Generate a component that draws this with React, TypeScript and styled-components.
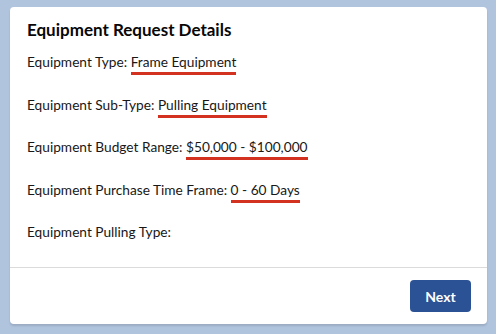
import React from "react";
import styled, { createGlobalStyle } from "styled-components";

const Global = createGlobalStyle`
  html, body { margin: 0; padding: 0; }
  body {
    background: #b0c4de;
    font-family: "Lato", "Open Sans", sans-serif;
    color: #181818;
  }
`;

const Page = styled.div`
  width: 496px;
  height: 334px;
  box-sizing: border-box;
  padding: 7px 9px 10px 10px;
  display: flex;
`;

const Card = styled.div`
  flex: 1;
  background: #fff;
  border-radius: 4px;
  box-shadow: 0 2px 2px rgba(0, 0, 0, 0.12);
  display: flex;
  flex-direction: column;
`;

const Body = styled.div`
  flex: 1;
  padding: 13px 16px 0 17px;
  border-bottom: 1px solid #dddbda;
`;

const Title = styled.h2`
  margin: 0 0 12px;
  font-size: 17px;
  font-weight: 700;
  line-height: 20px;
  color: #080707;
`;

const Fields = styled.div`
  display: flex;
  flex-direction: column;
  gap: 19.5px;
`;

const Row = styled.div`
  font-size: 13.7px;
  line-height: 20px;
  color: #181818;
`;

const Value = styled.span`
  display: inline-block;
  line-height: 16px;
  padding-bottom: 2px;
  border-bottom: 3px solid #d2321f;
`;

const Footer = styled.div`
  display: flex;
  justify-content: flex-end;
  padding: 12px 16px 12px;
`;

const Button = styled.button`
  width: 61px;
  height: 32px;
  border: none;
  border-radius: 4px;
  background: #2a5294;
  color: #fff;
  font-family: "Lato", sans-serif;
  font-size: 14px;
  font-weight: 700;
`;

const fields: { label: string; value?: string }[] = [
  { label: "Equipment Type:", value: "Frame Equipment" },
  { label: "Equipment Sub-Type:", value: "Pulling Equipment" },
  { label: "Equipment Budget Range:", value: "$50,000 - $100,000" },
  { label: "Equipment Purchase Time Frame:", value: "0 - 60 Days" },
  { label: "Equipment Pulling Type:" },
];

export default function App() {
  return (
    <>
      <Global />
      <Page>
        <Card>
          <Body>
            <Title>Equipment Request Details</Title>
            <Fields>
              {fields.map((f) => (
                <Row key={f.label}>
                  {f.label} {f.value && <Value>{f.value}</Value>}
                </Row>
              ))}
            </Fields>
          </Body>
          <Footer>
            <Button>Next</Button>
          </Footer>
        </Card>
      </Page>
    </>
  );
}
